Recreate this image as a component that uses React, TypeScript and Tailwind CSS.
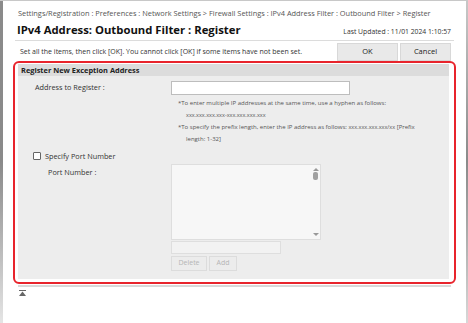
import React from "react";

const font = { fontFamily: '"Segoe UI", "Open Sans", "Noto Sans", sans-serif' };

export default function App() {
  return (
    <div
      className="relative h-[323px] w-[468px] overflow-hidden bg-white text-[#333]"
      style={font}
    >
      {/* window frame */}
      <div className="absolute inset-y-0 left-0 w-[3px] bg-gradient-to-b from-[#8a8a8a] via-[#8a8a8a] to-[#e5e5e5]" />
      <div className="absolute inset-y-0 right-0 w-[2px] bg-gradient-to-b from-[#c8c8c8] via-[#8a8a8a] to-[#d8d8d8]" />
      <div className="absolute inset-x-0 top-0 h-px bg-[#c8c8c8]" />

      <div className="flex flex-col pl-[15px] pr-[14px] pt-[7px]">
        <div className="whitespace-nowrap pl-[3px] text-[7.4px] leading-[12px] text-[#555]">
          Settings/Registration : Preferences : Network Settings &gt; Firewall Settings : IPv4 Address Filter : Outbound Filter &gt; Register
        </div>

        <div className="flex items-end justify-between border-b border-[#dcdcdc] pb-[3px] pl-[2px] pr-[3px] pt-[4px]">
          <h1 className="whitespace-nowrap text-[11.3px] font-bold leading-[14px] text-[#111]">
            IPv4 Address: Outbound Filter : Register
          </h1>
          <span className="whitespace-nowrap text-[6.8px] leading-[10px] text-[#333]">
            Last Updated : 11/01 2024 1:10:57
          </span>
        </div>

        <div className="flex items-center justify-between pl-[5px] pr-[3px] pt-[2px]">
          <span className="whitespace-nowrap text-[7px] text-[#333]">
            Set all the items, then click [OK]. You cannot click [OK] if some items have not been set.
          </span>
          <div className="flex gap-[2px]">
            <button className="h-[18px] w-[61px] border border-[#d8d8d8] bg-[#e9e9e9] text-[7.5px] text-[#222]">
              OK
            </button>
            <button className="h-[18px] w-[51px] border border-[#d8d8d8] bg-[#e9e9e9] text-[7.5px] text-[#222]">
              Cancel
            </button>
          </div>
        </div>

        <div className="-ml-[2px] mr-[-2px] rounded-[6px] border-2 border-[#e8242c] pb-[3px] pl-[3px] pr-[5px] pt-[1px]">
          <div className="bg-[#ededed] pb-[8px]">
            <div className="bg-[#dcdcdc] px-[3px] text-[7.4px] font-bold leading-[12px] text-[#222]">
              Register New Exception Address
            </div>

            <div className="flex pt-[5px]">
              <div className="w-[153px] shrink-0 pl-[17px] pt-[1px] text-[7.3px] text-[#333]">
                Address to Register :
              </div>
              <div className="flex flex-col">
                <div className="h-[14px] w-[179px] border border-[#bdbdbd] bg-white" />
                <div className="pl-[7px] pt-[3px] text-[6px] leading-[11.5px] text-[#555]">
                  <div className="whitespace-nowrap">
                    *To enter multiple IP addresses at the same time, use a hyphen as follows:
                  </div>
                  <div className="pl-[8px] text-[5.5px]">xxx.xxx.xxx.xxx-xxx.xxx.xxx.xxx</div>
                  <div className="mt-[1px] whitespace-nowrap">
                    *To specify the prefix length, enter the IP address as follows:{" "}
                    <span className="text-[5.5px]">xxx.xxx.xxx.xxx/xx</span> [Prefix
                  </div>
                  <div className="pl-[8px]">length: 1-32]</div>
                </div>
              </div>
            </div>

            <div className="flex items-center gap-[4px] pl-[15px] pt-[6px]">
              <span className="h-[8px] w-[8px] rounded-[1px] border border-[#666] bg-white" />
              <span className="text-[7.3px] text-[#333]">Specify Port Number</span>
            </div>

            <div className="flex pt-[2px]">
              <div className="w-[153px] shrink-0 pl-[30px] pt-[3px] text-[7.3px] text-[#333]">
                Port Number :
              </div>
              <div className="flex flex-col gap-[1px]">
                <div className="flex h-[76px] w-[150px] border border-[#dedede] bg-[#f7f7f7]">
                  <div className="flex-1" />
                  <div className="flex w-[9px] flex-col items-center justify-between py-[3px]">
                    <div className="flex flex-col items-center gap-[1px]">
                      <span className="h-0 w-0 border-x-[3px] border-b-[3px] border-x-transparent border-b-[#999]" />
                      <span className="h-[8px] w-[5px] rounded-[2px] bg-[#a0a0a0]" />
                    </div>
                    <span className="h-0 w-0 border-x-[3px] border-t-[3px] border-x-transparent border-t-[#999]" />
                  </div>
                </div>
                <div className="h-[13px] w-[110px] border border-[#dedede] bg-[#f2f2f2]" />
                <div className="mt-[1px] flex gap-[2px]">
                  <button className="h-[15px] w-[36px] border border-[#dcdcdc] bg-[#ececec] text-[7px] text-[#b5b5b5]">
                    Delete
                  </button>
                  <button className="h-[15px] w-[28px] border border-[#dcdcdc] bg-[#ececec] text-[7px] text-[#b5b5b5]">
                    Add
                  </button>
                </div>
              </div>
            </div>
          </div>
        </div>

        <div className="ml-[3px] mr-[3px] mt-[1px] h-[2px] bg-[#d9d9d9]" />
        <div className="pl-[4px] pt-[3px]">
          <svg width="7" height="6" viewBox="0 0 7 6">
            <rect x="0" y="0" width="7" height="1" fill="#666" />
            <polygon points="3.5,1.5 7,6 0,6" fill="#666" />
          </svg>
        </div>
      </div>
    </div>
  );
}
